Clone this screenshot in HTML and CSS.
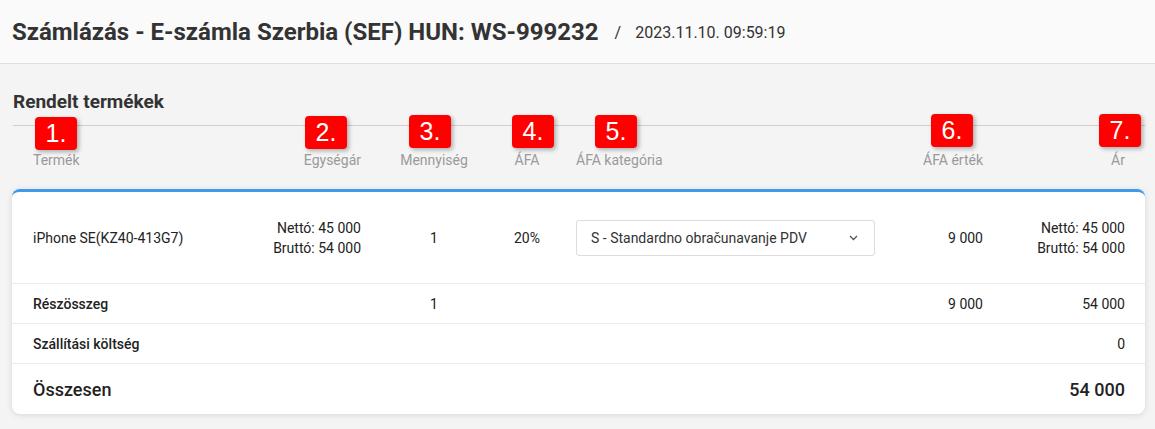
FILE: index.html
```html
<!DOCTYPE html>
<html lang="hu">
<head>
<meta charset="UTF-8">
<meta name="viewport" content="width=device-width, initial-scale=1.0">
<title>Számlázás - E-számla Szerbia (SEF)</title>
<link rel="stylesheet" href="styles.css">
</head>
<body>
<header class="page-head">
  <h1>Számlázás - E-számla Szerbia (SEF) HUN: WS-999232</h1>
  <span class="sep">/</span>
  <span class="date">2023.11.10. 09:59:19</span>
</header>

<main class="content">
  <h2 class="section-title">Rendelt termékek</h2>

  <div class="col-head">
    <div class="grid">
      <div>Termék</div>
      <div class="right">Egységár</div>
      <div class="center">Mennyiség</div>
      <div class="center">ÁFA</div>
      <div class="cat">ÁFA kategória</div>
      <div class="right">ÁFA érték</div>
      <div class="right">Ár</div>
    </div>
    <!-- jelölések -->
    <span class="badge b1">1.</span>
    <span class="badge b2">2.</span>
    <span class="badge b3">3.</span>
    <span class="badge b4">4.</span>
    <span class="badge b5">5.</span>
    <span class="badge b6">6.</span>
    <span class="badge b7">7.</span>
  </div>

  <div class="card">
    <div class="grid row row-item">
      <div>iPhone SE(KZ40-413G7)</div>
      <div class="right">Nettó: 45 000<br>Bruttó: 54 000</div>
      <div class="center">1</div>
      <div class="center">20%</div>
      <div class="cat">
        <div class="select">
          <span>S - Standardno obračunavanje PDV</span>
          <svg width="9" height="6" viewBox="0 0 9 6"><polyline points="1,1 4.5,4.5 8,1" fill="none" stroke="#555" stroke-width="1.3"/></svg>
        </div>
      </div>
      <div class="right">9 000</div>
      <div class="right">Nettó: 45 000<br>Bruttó: 54 000</div>
    </div>

    <div class="grid row">
      <div class="label">Részösszeg</div>
      <div></div>
      <div class="center">1</div>
      <div></div>
      <div></div>
      <div class="right">9 000</div>
      <div class="right">54 000</div>
    </div>

    <div class="grid row">
      <div class="label">Szállítási költség</div>
      <div></div>
      <div></div>
      <div></div>
      <div></div>
      <div></div>
      <div class="right">0</div>
    </div>

    <div class="grid row row-total">
      <div>Összesen</div>
      <div></div>
      <div></div>
      <div></div>
      <div></div>
      <div></div>
      <div class="right">54 000</div>
    </div>
  </div>
</main>
</body>
</html>
```

FILE: styles.css
```css
body {
  margin: 0;
  background-color: #f4f4f4;
  font-family: Roboto, "Liberation Sans", Arial, sans-serif;
  color: #222;
}
.page-head {
  display: flex;
  align-items: center;
  height: 63px;
  padding: 0 12px;
  background: #fafafa;
  border-bottom: 1px solid #dedede;
  color: #333;
}
.page-head h1 {
  margin: 0;
  font-size: 24px;
  font-weight: 700;
}
.page-head .sep {
  margin: 2px 0 0 16px;
  font-size: 16px;
}
.page-head .date {
  margin: 2px 0 0 14px;
  font-size: 16px;
}
.content {
  padding: 27px 10px 15px 12px;
}
.section-title {
  margin: 0 0 0 1px;
  font-size: 19px;
  line-height: 22px;
  font-weight: 700;
  color: #333;
  padding-bottom: 12px;
  border-bottom: 1px solid #cfcfcf;
}
.grid {
  display: grid;
  grid-template-columns: 1fr 108px 146px 40px 348px 88px 142px;
  align-items: center;
  padding: 0 20px 0 21px;
  font-size: 14px;
}
.right { text-align: right; }
.center { text-align: center; }
.cat { padding-left: 29px; }

.col-head {
  position: relative;
  padding: 26px 0 21px;
  color: #9a9a9a;
  line-height: 16px;
}
.badge {
  position: absolute;
  width: 42px;
  height: 33px;
  line-height: 33px;
  text-align: center;
  background: #ff0000;
  color: #fff;
  font-family: "Liberation Sans", Arial, sans-serif;
  font-size: 25px;
  border-radius: 4px;
  box-shadow: 2px 2px 4px rgba(0, 0, 0, 0.3);
}
.b1 { left: 23px; top: -9px; }
.b2 { left: 293px; top: -10px; }
.b3 { left: 397px; top: -11px; }
.b4 { left: 500px; top: -11px; }
.b5 { left: 583px; top: -11px; }
.b6 { left: 919px; top: -12px; }
.b7 { left: 1087px; top: -12px; }

.card {
  background: #fff;
  border-top: 3px solid #3f9be8;
  border-radius: 8px;
  box-shadow: 0 1px 6px rgba(0, 0, 0, 0.12);
}
.row {
  height: 39px;
  border-bottom: 1px solid #ebebeb;
}
.row-item {
  height: 91px;
  line-height: 20px;
}
.row .label { font-weight: 500; }
.row-total {
  height: 50px;
  border-bottom: none;
  font-size: 18px;
  font-weight: 500;
}
.select {
  display: flex;
  align-items: center;
  justify-content: space-between;
  width: 299px;
  height: 36px;
  box-sizing: border-box;
  padding: 0 16px 0 14px;
  border: 1px solid #dcdcdc;
  border-radius: 3px;
  color: #333;
}
```
